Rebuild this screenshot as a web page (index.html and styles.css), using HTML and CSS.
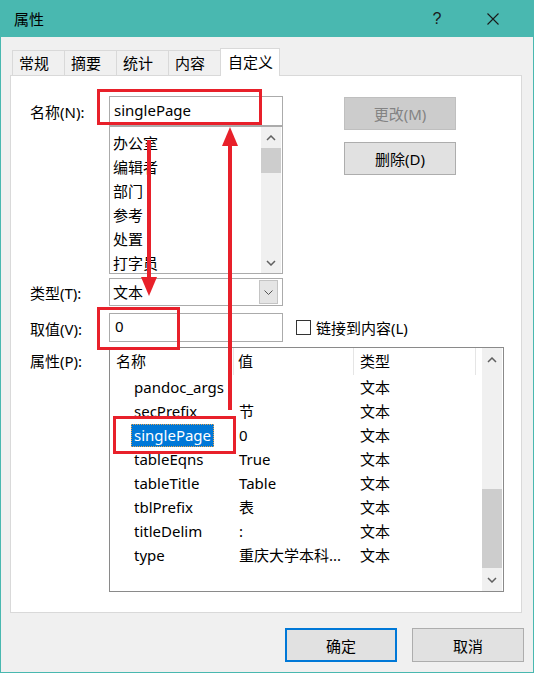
FILE: index.html
```html
<!DOCTYPE html>
<html lang="zh-CN">
<head>
<meta charset="utf-8">
<title>属性</title>
<link rel="stylesheet" href="styles.css">
</head>
<body>
<div class="window">
  <header class="titlebar">
    <span class="title">属性</span>
    <span class="cap-btn help">?</span>
    <span class="cap-btn close"><svg width="12" height="12" viewBox="0 0 12 12"><path d="M0.5 0.5 L11.5 11.5 M11.5 0.5 L0.5 11.5" stroke="#1a1a1a" stroke-width="1.1" fill="none"/></svg></span>
  </header>
  <main class="content">
    <nav class="tabs">
      <div class="tab">常规</div>
      <div class="tab">摘要</div>
      <div class="tab">统计</div>
      <div class="tab">内容</div>
      <div class="tab active">自定义</div>
    </nav>
    <section class="panel">
      <div class="row">
        <div class="lbl lbl-name">名称(N):</div>
        <div class="mid">
          <div class="field field-name">singlePage</div>
          <div class="listbox">
            <ul class="items">
              <li>办公室</li>
              <li>编辑者</li>
              <li>部门</li>
              <li>参考</li>
              <li>处置</li>
              <li>打字员</li>
            </ul>
            <div class="vscroll">
              <div class="sb-btn"><svg width="10" height="6" viewBox="0 0 10 6"><path d="M1 5 L5 1 L9 5" stroke="#606060" stroke-width="1.5" fill="none"/></svg></div>
              <div class="thumb thumb-list"></div>
              <div class="sb-track"></div>
              <div class="sb-btn"><svg width="10" height="6" viewBox="0 0 10 6"><path d="M1 1 L5 5 L9 1" stroke="#606060" stroke-width="1.5" fill="none"/></svg></div>
            </div>
          </div>
        </div>
        <div class="btn-col">
          <button class="btn btn-disabled">更改(M)</button>
          <button class="btn">删除(D)</button>
        </div>
      </div>

      <div class="row row-type">
        <div class="lbl lbl-type">类型(T):</div>
        <div class="combo">
          <span class="combo-text">文本</span>
          <span class="combo-btn"><svg width="9" height="5" viewBox="0 0 9 5"><path d="M0.5 0.5 L4.5 4.5 L8.5 0.5" stroke="#555" stroke-width="1" fill="none"/></svg></span>
        </div>
      </div>

      <div class="row row-val">
        <div class="lbl lbl-val">取值(V):</div>
        <div class="field field-val">0</div>
        <div class="check"><span class="box"></span><span>链接到内容(L)</span></div>
      </div>

      <div class="row row-props">
        <div class="lbl lbl-props">属性(P):</div>
        <div class="props">
          <div class="props-main">
            <div class="props-head">
              <div class="hcell hc1">名称</div>
              <div class="hcell hc2">值</div>
              <div class="hcell hc3">类型</div>
            </div>
            <div class="prow"><span class="pname">pandoc_args</span><span class="pval"></span><span class="ptype">文本</span></div>
            <div class="prow"><span class="pname">secPrefix</span><span class="pval">节</span><span class="ptype">文本</span></div>
            <div class="prow"><span class="pname"><span class="sel">singlePage</span></span><span class="pval">0</span><span class="ptype">文本</span></div>
            <div class="prow"><span class="pname">tableEqns</span><span class="pval">True</span><span class="ptype">文本</span></div>
            <div class="prow"><span class="pname">tableTitle</span><span class="pval">Table</span><span class="ptype">文本</span></div>
            <div class="prow"><span class="pname">tblPrefix</span><span class="pval">表</span><span class="ptype">文本</span></div>
            <div class="prow"><span class="pname">titleDelim</span><span class="pval">:</span><span class="ptype">文本</span></div>
            <div class="prow"><span class="pname">type</span><span class="pval">重庆大学本科...</span><span class="ptype">文本</span></div>
          </div>
          <div class="vscroll vscroll-props">
            <div class="sb-btn sb-up-props"><svg width="10" height="6" viewBox="0 0 10 6"><path d="M1 5 L5 1 L9 5" stroke="#606060" stroke-width="1.5" fill="none"/></svg></div>
            <div class="thumb thumb-props"></div>
            <div class="sb-track"></div>
            <div class="sb-btn sb-down-props"><svg width="10" height="6" viewBox="0 0 10 6"><path d="M1 1 L5 5 L9 1" stroke="#606060" stroke-width="1.5" fill="none"/></svg></div>
          </div>
        </div>
      </div>
    </section>
    <footer class="footer">
      <button class="dlg-btn default">确定</button>
      <button class="dlg-btn">取消</button>
    </footer>
  </main>
</div>
<svg class="annot" width="534" height="673" viewBox="0 0 534 673">
  <g fill="none" stroke="#E8202A" stroke-width="3">
    <rect x="98.5" y="90.5" width="162" height="33"/>
    <rect x="98.5" y="308.5" width="80" height="40"/>
    <rect x="114.5" y="417.5" width="120" height="35"/>
  </g>
  <g fill="#E8202A">
    <rect x="147" y="140" width="4" height="140"/>
    <polygon points="141,277 157,277 149,296"/>
    <rect x="228" y="143" width="4" height="267"/>
    <polygon points="222,146 238,146 230,127"/>
  </g>
</svg>
</body>
</html>
```

FILE: styles.css
```css
* { box-sizing: border-box; }
html, body { margin: 0; padding: 0; }
body {
  position: relative;
  width: 534px;
  height: 673px;
  overflow: hidden;
  background: #F0F0F0;
  font-family: "Noto Sans", "Noto Sans CJK SC", sans-serif;
  font-size: 15px;
  color: #000;
}
.window {
  width: 534px;
  height: 673px;
  border: 1px solid #49B8B0;
  border-top: none;
  display: flex;
  flex-direction: column;
  background: #F0F0F0;
}
.titlebar {
  height: 37px;
  flex: none;
  background: #49B8B0;
  display: flex;
  align-items: center;
  padding: 0 17px 0 13px;
}
.title { flex: 1; line-height: 20px; }
.cap-btn {
  width: 46px;
  height: 37px;
  display: flex;
  align-items: center;
  justify-content: center;
}
.help { margin-right: 10px; font-size: 16px; color: #1a1a1a; font-family: "Liberation Sans", sans-serif; }

.content {
  flex: 1;
  padding-top: 11px;
  display: flex;
  flex-direction: column;
}
.tabs {
  display: flex;
  align-items: flex-end;
  height: 28px;
  margin: 0 0 -1px 11px;
  position: relative;
  z-index: 1;
}
.tab {
  height: 25px;
  margin-bottom: 1px;
  margin-right: -1px;
  border: 1px solid #D9D9D9;
  border-bottom: none;
  background: #F0F0F0;
  padding: 0 15px 0 6px;
  line-height: 24px;
}
.tab.active {
  height: 28px;
  margin-bottom: 0;
  background: #fff;
  padding: 0 6px 0 7px;
  line-height: 26px;
}
.panel {
  height: 538px;
  flex: none;
  margin: 0 11px 0 9px;
  background: #fff;
  border: 1px solid #D9D9D9;
  padding-top: 20px;
}
.row { display: flex; align-items: flex-start; }
.lbl { width: 98px; flex: none; padding-left: 19px; white-space: nowrap; }
.lbl-name { height: 30px; line-height: 32px; }
.mid { width: 174px; flex: none; }
.field {
  width: 174px;
  height: 30px;
  border: 1px solid #ABABAB;
  padding-left: 4px;
  line-height: 27px;
  background: #fff;
}
.listbox {
  height: 148px;
  border: 1px solid #ABABAB;
  display: flex;
}
.items {
  list-style: none;
  margin: 0;
  padding: 4px 0 0 3px;
  flex: 1;
  line-height: 24px;
  overflow: hidden;
}
.vscroll {
  width: 20px;
  flex: none;
  background: #F0F0F0;
  display: flex;
  flex-direction: column;
  margin-right: 1px;
}
.sb-btn {
  height: 21px;
  flex: none;
  display: flex;
  align-items: center;
  justify-content: center;
}
.thumb { background: #CDCDCD; flex: none; }
.thumb-list { height: 25px; }
.sb-track { flex: 1; }

.btn-col {
  margin-left: 61px;
  margin-top: 1px;
  display: flex;
  flex-direction: column;
  gap: 12px;
}
.btn {
  width: 112px;
  height: 33px;
  border: 1px solid #ADADAD;
  background: #E1E1E1;
  font: inherit;
  color: #000;
  padding: 0;
  line-height: 30px;
}
.btn-disabled {
  background: #CCCCCC;
  border-color: #BFBFBF;
  color: #838383;
}

.row-type { margin-top: 4px; height: 28px; }
.lbl-type { height: 28px; line-height: 31px; }
.combo {
  width: 174px;
  height: 28px;
  border: 1px solid #ABABAB;
  display: flex;
  align-items: center;
  padding-left: 3px;
}
.combo-text { flex: 1; line-height: 26px; }
.combo-btn {
  width: 19px;
  height: 24px;
  margin-right: 4px;
  background: #E5E5E5;
  border: 1px solid #C4C4C4;
  display: flex;
  align-items: center;
  justify-content: center;
}

.row-val { margin-top: 7px; height: 29px; }
.lbl-val { height: 29px; line-height: 33px; }
.field-val { height: 29px; padding-left: 5px; line-height: 25px; }
.check {
  margin-left: 13px;
  height: 29px;
  display: flex;
  align-items: center;
}
.box {
  width: 15px;
  height: 15px;
  border: 1px solid #333;
  background: #fff;
  margin-right: 5px;
}

.row-props { margin-top: 5px; }
.lbl-props { line-height: 28px; }
.props {
  width: 395px;
  height: 245px;
  border: 1px solid #8A8A8A;
  display: flex;
}
.props-main { flex: 1; }
.props-head, .prow {
  display: grid;
  grid-template-columns: 124px 120px 122px;
}
.props-head { height: 27px; }
.hcell {
  border-right: 1px solid #E5E5E5;
  line-height: 27px;
  padding-left: 6px;
}
.hc2 { padding-left: 4px; }
.prow { height: 24px; line-height: 24px; }
.pname { padding-left: 24px; white-space: nowrap; }
.pval { padding-left: 5px; white-space: nowrap; }
.ptype { padding-left: 6px; }
.sel {
  display: inline-block;
  background: #0078D7;
  color: #fff;
  line-height: 23px;
  padding: 0 3px;
  margin-left: -3px;
  outline: 1px dotted #E9A650;
  outline-offset: -1px;
}
.sb-up-props { height: 24px; }
.thumb-props { margin-top: 117px; height: 79px; }
.sb-down-props { height: 22px; }

.footer {
  display: flex;
  justify-content: flex-end;
  gap: 15px;
  padding: 15px 9px 0 0;
}
.dlg-btn {
  width: 112px;
  height: 34px;
  border: 1px solid #ADADAD;
  background: #E1E1E1;
  font: inherit;
  color: #000;
  padding: 0;
}
.dlg-btn.default { border: 2px solid #0078D7; }

.annot {
  position: absolute;
  left: 0;
  top: 0;
  pointer-events: none;
}
```
